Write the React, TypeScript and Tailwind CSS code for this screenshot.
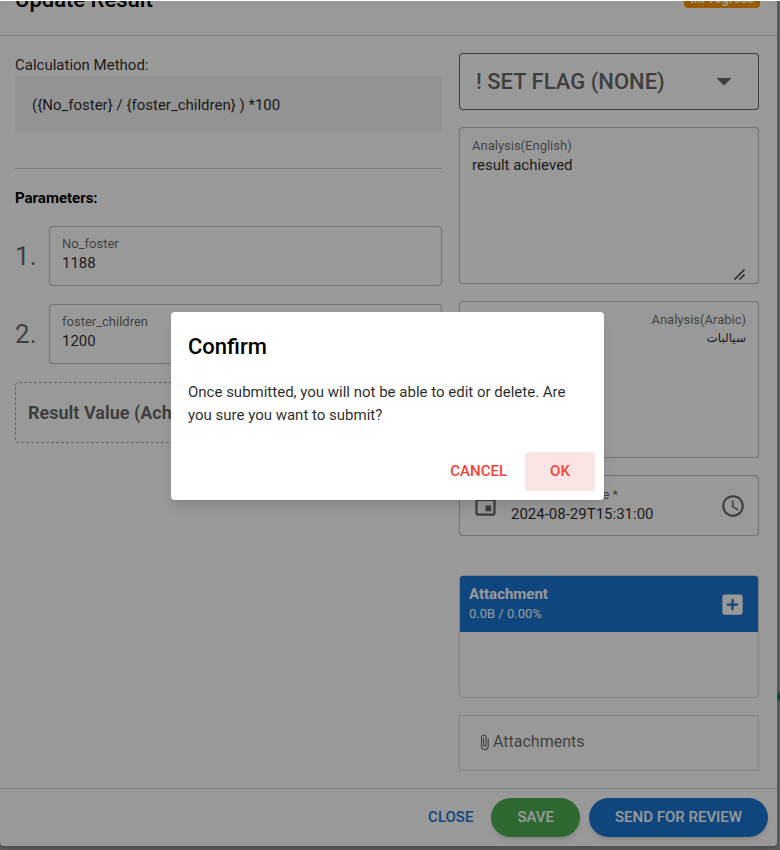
import { useState, type ReactNode } from "react";
import { MdAccessTime, MdAddBox, MdArrowDropDown, MdAttachFile, MdEvent } from "react-icons/md";

const outline = "rounded border border-black/25 bg-white";

function NumberField({ index, id, value }: { index: number; id: string; value: string }) {
  return (
    <li className="flex items-center">
      <span className="w-[34px] shrink-0 text-[26px] leading-8 text-black/60">{index}.</span>
      <div className={`h-[60px] min-w-0 flex-1 px-3 pt-[7px] ${outline}`}>
        <label htmlFor={id} className="block text-[13px] leading-[19px] text-black/60">{id}</label>
        <input id={id} defaultValue={value} className="block h-5 w-full bg-transparent text-[15px] leading-5 text-black/85 outline-none" />
      </div>
    </li>
  );
}

function AnalysisField({ id, label, value, rtl, children }: { id: string; label: string; value: string; rtl?: boolean; children?: ReactNode }) {
  return (
    <div dir={rtl ? "rtl" : "ltr"} className={`relative h-[157px] px-3 pt-2 ${outline}`}>
      <label htmlFor={id} className="block text-[13px] leading-[19px] text-black/60">{label}</label>
      <textarea
        id={id}
        defaultValue={value}
        className={`block h-[122px] w-full resize-none bg-transparent text-black/85 outline-none ${rtl ? "text-xs leading-[18px]" : "text-[15px] leading-5"}`}
      />
      {children}
    </div>
  );
}

export default function App() {
  const [open, setOpen] = useState(true);
  return (
    <div className="relative min-h-screen overflow-hidden bg-white pt-px font-['Roboto','DejaVu_Sans',sans-serif] text-[15px] text-black">
      <div className="relative min-h-[849px] bg-[#999999] pr-[3px] pb-[5px]">
        <span className="absolute top-[690px] -right-2 size-[11px] rounded-full bg-[#0c8a5f]" />
        <main className="relative rounded-b bg-white shadow-md">
          <header className="flex h-[35px] items-end justify-between overflow-hidden border-b border-black/15 pr-[17px] pl-[15px]">
            <h1 className="pb-[23px] text-[22px] leading-6 font-medium">Update Result</h1>
            <span className="mb-[27px] rounded bg-[#ff9800] px-[6px] pb-px text-[13px] leading-[17px] font-bold text-white">InProgress</span>
          </header>

          <div className="grid grid-cols-[427fr_300fr] gap-[17px] pt-[17px] pr-[18px] pb-[17px] pl-[15px]">
            <section>
              <h2 className="pt-px text-[15px] leading-[22px] text-black/85">Calculation Method:</h2>
              <p className="bg-[#f5f5f5] px-[17px] pt-[18px] pb-4 leading-[23px] text-black/85">{"({No_foster} / {foster_children} ) *100"}</p>
              <hr className="mt-[35px] border-black/20" />
              <h2 className="mt-[18px] text-[15px] leading-[22px] font-bold">Parameters:</h2>
              <ol className="mt-[17px] space-y-[18px]">
                <NumberField index={1} id="No_foster" value="1188" />
                <NumberField index={2} id="foster_children" value="1200" />
              </ol>
              <div className="mt-[18px] flex h-[61px] items-center rounded border border-dashed border-black/35 px-3 text-lg font-bold text-black/60">
                Result Value (Achieved)
              </div>
            </section>

            <section className="flex flex-col gap-[17px]">
              <div className="relative text-black/60">
                <select aria-label="Set flag" className="block h-[57px] w-full appearance-none rounded border border-black/60 bg-white pl-4 text-[22px] font-medium outline-none">
                  <option>! SET FLAG (NONE)</option>
                </select>
                <MdArrowDropDown className="pointer-events-none absolute top-[10px] right-[17px] size-9" />
              </div>

              <AnalysisField id="analysis-en" label="Analysis(English)" value="result achieved">
                <svg viewBox="0 0 11 11" className="absolute right-[13px] bottom-[3px] size-[11px]" stroke="#222" strokeWidth="1.3" fill="none">
                  <path d="M0.5 10.5 10.5 0.5M5.5 10.5 10.5 5.5" />
                </svg>
              </AnalysisField>

              <AnalysisField id="analysis-ar" label="Analysis(Arabic)" value="سيالبات" rtl />

              <div className={`flex h-[61px] items-center px-3 text-black/60 ${outline}`}>
                <MdEvent className="size-[27px] shrink-0" />
                <div className="ml-3 min-w-0 flex-1 pb-[3px]">
                  <label htmlFor="result-date" className="block text-[13px] leading-[19px]">Result Date Time *</label>
                  <input id="result-date" defaultValue="2024-08-29T15:31:00" className="block h-5 w-full bg-transparent text-[15px] leading-5 text-black/85 outline-none" />
                </div>
                <MdAccessTime className="size-[26px] shrink-0" />
              </div>

              <div className="mt-[22px] h-[123px] overflow-hidden rounded border border-black/15">
                <div className="flex h-14 items-center justify-between bg-[#1976d2] pr-3 pl-[9px] text-white">
                  <div>
                    <div className="leading-5 font-bold">Attachment</div>
                    <div className="text-[13px] leading-5">0.0B / 0.00%</div>
                  </div>
                  <button aria-label="Add attachment"><MdAddBox className="size-[27px]" /></button>
                </div>
              </div>

              <div className="flex h-14 items-center border border-black/15 pb-[2px] pl-4 text-base text-black/60">
                <MdAttachFile className="size-[17px]" />
                Attachments
              </div>
            </section>
          </div>

          <footer className="flex items-center justify-end gap-[9px] border-t border-black/15 py-[9px] pr-[9px] text-[15px] font-medium text-white">
            <button className="h-[39px] px-[9px] text-[#1976d2]">CLOSE</button>
            <button className="h-[39px] rounded-full bg-[#4caf50] px-[26px] shadow-md">SAVE</button>
            <button className="h-[39px] rounded-full bg-[#1976d2] px-[26px] shadow-md">SEND FOR REVIEW</button>
          </footer>
        </main>
      </div>

      {open && (
        <div className="absolute inset-x-0 top-px bottom-0 flex items-center justify-center bg-black/40 pr-[5px] pb-[41px]">
          <div role="dialog" aria-modal="true" aria-labelledby="confirm-title" className="w-[433px] rounded bg-white shadow-lg">
            <h2 id="confirm-title" className="px-[17px] pt-[18px] text-[22px] leading-[34px] font-medium">Confirm</h2>
            <p className="px-[17px] pt-[17px] leading-[23px] text-black/85">
              Once submitted, you will not be able to edit or delete. Are you sure you want to submit?
            </p>
            <div className="flex justify-end gap-[9px] px-[9px] pt-[25px] pb-[9px] font-medium text-[#f44336]">
              <button className="h-[39px] px-[9px]" onClick={() => setOpen(false)}>CANCEL</button>
              <button className="h-[39px] w-[70px] rounded bg-[#fbe5e4]" onClick={() => setOpen(false)}>OK</button>
            </div>
          </div>
        </div>
      )}
    </div>
  );
}
